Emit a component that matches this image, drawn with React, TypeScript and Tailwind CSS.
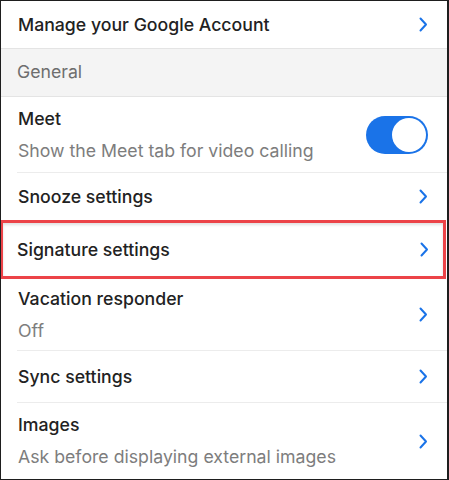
import React from 'react'

const Chevron = () => (
  <svg width="9" height="15" viewBox="0 0 9 15" fill="none" className="shrink-0">
    <path d="M1.5 1.5L7 7.5L1.5 13.5" stroke="#1a73e8" strokeWidth="2" strokeLinecap="round" strokeLinejoin="round" />
  </svg>
)

const Toggle = () => (
  <div className="flex h-[38px] w-[62px] shrink-0 items-center justify-end rounded-full bg-[#1a73e8] p-[2px]">
    <div className="h-[34px] w-[34px] rounded-full bg-white" />
  </div>
)

const Row = ({
  title,
  sub,
  right,
  className = '',
  pad = 'pl-[17px] pr-[19px]',
}: {
  title: string
  sub?: string
  right: React.ReactNode
  className?: string
  pad?: string
}) => (
  <div className={`flex items-center justify-between ${pad} ${className}`}>
    <div className="flex flex-col">
      <div className="text-[17.7px] leading-[22px] font-medium text-[#222]">{title}</div>
      {sub && <div className="mt-[10px] text-[17.7px] leading-[22px] text-[#7d7d7d]">{sub}</div>}
    </div>
    {right}
  </div>
)

export default function App() {
  return (
    <div
      className="h-[480px] w-[449px] overflow-hidden border-b border-l border-r-2 border-t border-[#1e1e1e] bg-white"
      style={{ fontFamily: 'Inter, "Liberation Sans", Arial, sans-serif' }}
    >
      <Row title="Manage your Google Account" right={<Chevron />} className="h-[47px]" />
      <div className="flex h-[49px] items-center border-y border-[#e4e4e4] bg-[#f4f4f4] pl-[16px] text-[17.7px] text-[#6e6e6e]">
        General
      </div>
      <Row
        title="Meet"
        sub="Show the Meet tab for video calling"
        right={<Toggle />}
        className="h-[75px]"
      />
      <div className="ml-[16px] h-px bg-[#ececec]" />
      <Row title="Snooze settings" right={<Chevron />} className="h-[47px]" />
      <div className="-ml-px mr-[1px] border-[3px] border-[#ec4348] shadow-[inset_0_2px_3px_rgba(0,0,0,0.12)]">
        <Row
          title="Signature settings"
          right={<Chevron />}
          className="h-[53px]"
          pad="pl-[14px] pr-[14px]"
        />
      </div>
      <Row title="Vacation responder" sub="Off" right={<Chevron />} className="h-[71px]" />
      <div className="ml-[16px] h-px bg-[#ececec]" />
      <Row title="Sync settings" right={<Chevron />} className="h-[51px]" />
      <div className="ml-[16px] h-px bg-[#ececec]" />
      <Row
        title="Images"
        sub="Ask before displaying external images"
        right={<Chevron />}
        className="h-[76px]"
      />
    </div>
  )
}
